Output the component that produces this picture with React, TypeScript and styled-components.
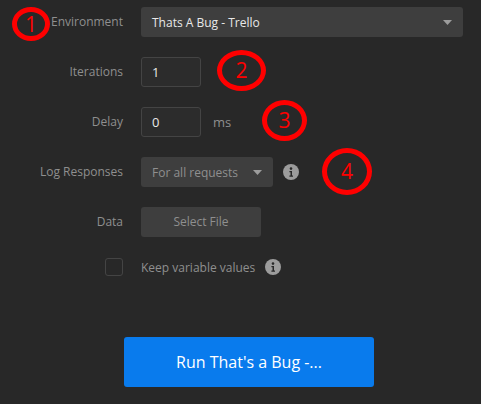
import styled, { createGlobalStyle } from "styled-components";

const GlobalStyle = createGlobalStyle`
  html, body {
    margin: 0;
    padding: 0;
    background: #282828;
  }
  body {
    font-family: "Open Sans", "Noto Sans", sans-serif;
  }
`;

const ANNOTATIONS = [
  { n: 1, left: 12, top: 7, w: 38, h: 34 },
  { n: 2, left: 217, top: 50, w: 49, h: 41 },
  { n: 3, left: 262, top: 100, w: 45, h: 41 },
  { n: 4, left: 322, top: 148, w: 50, h: 47 },
];

const InfoIcon = () => (
  <InfoSvg viewBox="0 0 16 16" width="16" height="16">
    <circle cx="8" cy="8" r="8" fill="#9c9c9c" />
    <circle cx="8" cy="4.6" r="1.3" fill="#282828" />
    <path d="M6.4 7h2.6v4.6h1v1.2H6.4v-1.2h1.1V8.2H6.4z" fill="#282828" />
  </InfoSvg>
);

const Caret = () => (
  <svg width="9" height="5" viewBox="0 0 9 5">
    <path d="M0 0h9L4.5 5z" fill="#9c9c9c" />
  </svg>
);

const App = () => {
  return (
    <Page>
      <GlobalStyle />
      <Form>
        <Label>Environment</Label>
        <Select $width={322} $bright>
          <span>Thats A Bug - Trello</span>
          <Caret />
        </Select>

        <Label>Iterations</Label>
        <Field>
          <Input>1</Input>
        </Field>

        <Label>Delay</Label>
        <Field>
          <Input>0</Input>
          <Unit>ms</Unit>
        </Field>

        <Label>Log Responses</Label>
        <Field>
          <Select $width={132}>
            <span>For all requests</span>
            <Caret />
          </Select>
          <InfoIcon />
        </Field>

        <Label>Data</Label>
        <Field>
          <FileButton>Select File</FileButton>
        </Field>

        <CheckCell>
          <Checkbox />
        </CheckCell>
        <CheckField>
          <CheckText>Keep variable values</CheckText>
          <InfoIcon />
        </CheckField>
      </Form>

      <Footer>
        <RunButton>Run That's a Bug -...</RunButton>
      </Footer>

      {ANNOTATIONS.map((a) => (
        <Marker
          key={a.n}
          style={{ left: a.left, top: a.top, width: a.w, height: a.h }}
        >
          {a.n}
        </Marker>
      ))}
    </Page>
  );
};

export default App;

const Page = styled.div`
  position: relative;
  width: 481px;
  height: 404px;
  padding-top: 7px;
  box-sizing: border-box;
  font-size: 12px;
`;

const Form = styled.div`
  display: grid;
  grid-template-columns: 123px 1fr;
  column-gap: 18px;
  row-gap: 20px;
  padding-right: 18px;
  align-items: center;
`;

const Label = styled.div`
  text-align: right;
  color: #8f8f8f;
  line-height: 30px;
`;

const Field = styled.div`
  display: flex;
  align-items: center;
  height: 30px;
`;

const Select = styled.div<{ $width: number; $bright?: boolean }>`
  display: flex;
  align-items: center;
  justify-content: space-between;
  width: ${({ $width }) => $width}px;
  height: 30px;
  box-sizing: border-box;
  padding: 0 11px 0 11px;
  background: #3e3e3e;
  border-radius: 3px;
  color: ${({ $bright }) => ($bright ? "#e8e8e8" : "#8f8f8f")};
`;

const Input = styled.div`
  width: 60px;
  height: 30px;
  box-sizing: border-box;
  padding: 0 10px;
  line-height: 28px;
  background: #2c2c2c;
  border: 1px solid #444444;
  border-radius: 3px;
  color: #e8e8e8;
  font-size: 13px;
`;

const Unit = styled.span`
  margin-left: 12px;
  color: #8f8f8f;
  font-size: 13px;
`;

const InfoSvg = styled.svg`
  margin-left: 10px;
  flex-shrink: 0;
`;

const FileButton = styled.div`
  width: 120px;
  height: 30px;
  line-height: 30px;
  text-align: center;
  background: #3e3e3e;
  border-radius: 3px;
  color: #8f8f8f;
`;

const CheckCell = styled.div`
  display: flex;
  justify-content: flex-end;
  height: 20px;
  align-items: center;
`;

const Checkbox = styled.div`
  width: 18px;
  height: 18px;
  box-sizing: border-box;
  border: 1px solid #444444;
  border-radius: 3px;
`;

const CheckField = styled.div`
  display: flex;
  align-items: center;
  height: 20px;
`;

const CheckText = styled.span`
  color: #8f8f8f;
`;

const Footer = styled.div`
  padding: 60px 0 0 124px;
`;

const RunButton = styled.div`
  width: 250px;
  height: 50px;
  line-height: 50px;
  text-align: center;
  background: #097bed;
  border-radius: 3px;
  color: #ffffff;
  font-size: 16px;
`;

const Marker = styled.div`
  position: absolute;
  box-sizing: border-box;
  border: 5px solid #ff0000;
  border-radius: 50%;
  display: flex;
  align-items: center;
  justify-content: center;
  color: #ff0000;
  font-size: 21px;
  line-height: 1;
`;
